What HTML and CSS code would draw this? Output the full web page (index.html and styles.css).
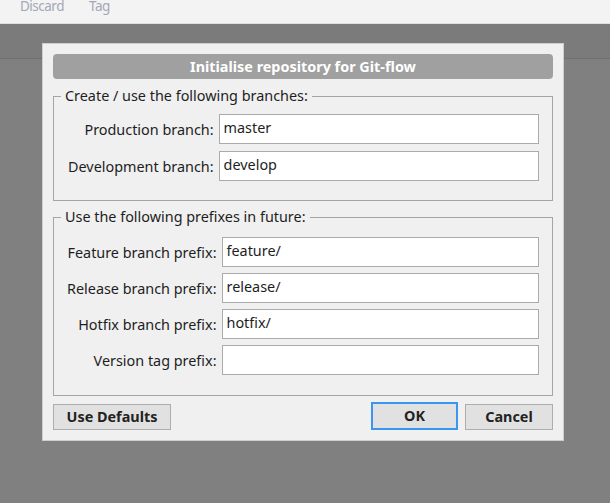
FILE: index.html
```html
<!DOCTYPE html>
<html>
<head>
<meta charset="utf-8">
<link rel="stylesheet" href="styles.css">
</head>
<body>
<div class="app">
  <div class="toolbar">
    <span class="tool">Discard</span>
    <span class="tool">Tag</span>
  </div>
  <div class="band"></div>
  <div class="rest"></div>
</div>

<div class="dialog">
  <div class="title">Initialise repository for Git-flow</div>

  <fieldset class="group g1box">
    <legend>Create / use the following branches:</legend>
    <div class="form g1">
      <label>Production branch:</label><div class="input">master</div>
      <label>Development branch:</label><div class="input">develop</div>
    </div>
  </fieldset>

  <fieldset class="group g2box">
    <legend>Use the following prefixes in future:</legend>
    <div class="form g2">
      <label>Feature branch prefix:</label><div class="input">feature/</div>
      <label>Release branch prefix:</label><div class="input">release/</div>
      <label>Hotfix branch prefix:</label><div class="input">hotfix/</div>
      <label>Version tag prefix:</label><div class="input"></div>
    </div>
  </fieldset>

  <div class="buttons">
    <button class="btn defaults">Use Defaults</button>
    <div class="spacer"></div>
    <button class="btn ok">OK</button>
    <button class="btn cancel">Cancel</button>
  </div>
</div>
</body>
</html>
```

FILE: styles.css
```css
* { box-sizing: border-box; }
html, body {
  margin: 0;
  padding: 0;
  width: 610px;
  height: 503px;
  overflow: hidden;
  font-family: "Noto Sans", "Open Sans", sans-serif;
}
.app {
  display: flex;
  flex-direction: column;
  height: 503px;
}
.toolbar {
  height: 24px;
  background: #f3f3f3;
  border-bottom: 1px solid #dedede;
  display: flex;
  align-items: flex-start;
  padding-left: 20px;
  gap: 25px;
  overflow: hidden;
}
.tool {
  font-size: 13.5px;
  line-height: 14px;
  letter-spacing: -0.5px;
  margin-top: -1px;
  color: #a3a8b5;
}
.band {
  height: 35px;
  background: #7b7b7b;
  border-bottom: 1px solid #6f6f6f;
}
.rest {
  flex: 1;
  background: #808080;
}

.dialog {
  position: absolute;
  left: 42px;
  top: 43px;
  width: 522px;
  height: 398px;
  background: #f0f0f0;
  border: 1px solid #cfcfcf;
  padding: 10px 10px 11px 10px;
  display: flex;
  flex-direction: column;
  color: #1e1e1e;
}
.title {
  height: 25px;
  background: #a0a0a0;
  border-radius: 4px;
  color: #fff;
  font-weight: bold;
  font-size: 14.4px;
  line-height: 25px;
  text-align: center;
  margin-bottom: 7px;
}
.group {
  margin: 0 0 6px 0;
  border: 1px solid #a5a5a5;
  padding: 8px 13px 19px 13px;
}
.g1box { padding-left: 14px; }
.g2box {
  padding-top: 10px;
  padding-bottom: 20px;
  margin-bottom: 4px;
}
.group legend {
  font-size: 14.4px;
  line-height: 20px;
  padding: 0 4px;
  margin-left: -6px;
}
.g1box legend { margin-left: -7px; }
.form {
  display: grid;
  grid-template-columns: auto 1fr;
  column-gap: 5px;
  row-gap: 6px;
  align-items: center;
}
.form label {
  font-size: 14.4px;
  text-align: right;
  white-space: nowrap;
  padding-top: 1px;
}
.g1 { row-gap: 7px; }
.input {
  height: 30px;
  background: #fff;
  border: 1px solid #ababab;
  font-size: 14.4px;
  line-height: 26px;
  padding: 0 4px;
}
.buttons {
  display: flex;
  align-items: flex-end;
  gap: 7px;
  margin-top: 2px;
}
.spacer { flex: 1; }
.btn {
  font-family: "Noto Sans", "Open Sans", sans-serif;
  font-weight: bold;
  font-size: 14.4px;
  color: #222;
  background: #e1e1e1;
  border: 1px solid #adadad;
  height: 26px;
  padding: 0;
  line-height: 24px;
}
.defaults { width: 118px; }
.ok {
  width: 87px;
  height: 28px;
  border: 2px solid #3c96f0;
  line-height: 22px;
}
.cancel { width: 88px; }
```
